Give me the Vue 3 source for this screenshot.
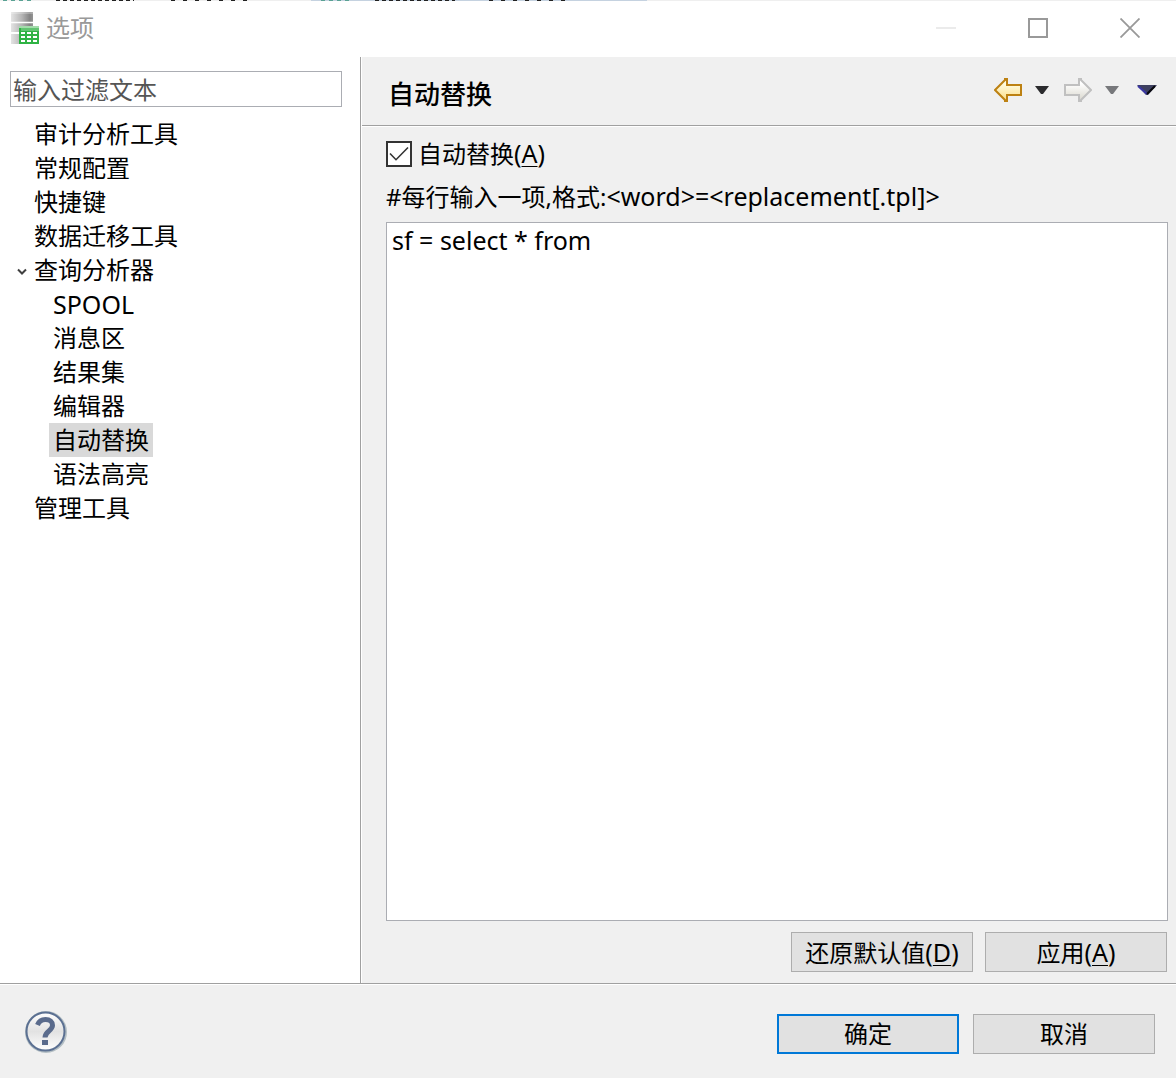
<script setup>
import { ref } from 'vue'

const filter = ref('')
const enabled = ref(true)
const rules = ref('sf = select * from')
const selected = ref('自动替换')
const expanded = ref(true)

const tree = [
  { label: '审计分析工具' },
  { label: '常规配置' },
  { label: '快捷键' },
  { label: '数据迁移工具' },
  {
    label: '查询分析器',
    children: ['SPOOL', '消息区', '结果集', '编辑器', '自动替换', '语法高亮'],
  },
  { label: '管理工具' },
]

const isLatin = (text) => /^[A-Z]+$/.test(text)
</script>

<template>
  <div class="dialog">
    <div class="backdrop-edge"><span></span></div>
    <header class="titlebar">
      <svg class="app-icon" width="28" height="32" viewBox="0 0 28 32" aria-hidden="true">
        <defs>
          <linearGradient id="slab" x1="0" x2="1" y1="0" y2="0">
            <stop offset="0" stop-color="#e4e4e4" />
            <stop offset="0.5" stop-color="#b4b4b4" />
            <stop offset="0.85" stop-color="#848484" />
            <stop offset="1" stop-color="#949494" />
          </linearGradient>
        </defs>
        <path d="M0 0h22v10H0zM0 11h22v9H0zM0 22h22v10H0z" fill="url(#slab)" />
        <path d="M0 0h22v2H0zM0 9h22v1H0zM0 11h22v1H0z" fill="#fff" opacity=".25" />
        <path d="M8 14h20v2H8z" fill="#a4dcac" />
        <path d="M8 16h20v16H8z" fill="#2fb344" />
        <path d="M10 16h18v3H10z" fill="#62c472" />
        <path d="M10 20h4v2h-4zM16 20h4v2h-4zM22 20h4v2h-4zM10 24h4v2h-4zM16 24h4v2h-4zM22 24h4v2h-4zM10 28h4v2h-4zM16 28h4v2h-4zM22 28h4v2h-4z" fill="#fff" />
      </svg>
      <h1>选项</h1>
      <div class="window-controls">
        <button type="button" aria-label="最小化" disabled>
          <svg width="20" height="20" viewBox="0 0 20 20"><path d="M0 9h20v2H0z" fill="#ebebeb" /></svg>
        </button>
        <button type="button" aria-label="最大化">
          <svg width="20" height="20" viewBox="0 0 20 20"><path d="M1 1h18v18H1z" fill="none" stroke="#999" stroke-width="2" /></svg>
        </button>
        <button type="button" aria-label="关闭">
          <svg width="20" height="20" viewBox="0 0 20 20"><path d="M.5 .5l19 19M19.5 .5l-19 19" stroke="#999" stroke-width="1.8" /></svg>
        </button>
      </div>
    </header>

    <div class="body">
      <nav class="sidebar">
        <input v-model="filter" class="filter" type="text" placeholder="输入过滤文本" aria-label="输入过滤文本" />
        <ul class="tree">
          <li v-for="node in tree" :key="node.label">
            <div class="row">
              <button v-if="node.children" type="button" class="twisty" aria-label="展开" :aria-expanded="expanded" @click="expanded = !expanded">
                <svg width="12" height="8" viewBox="0 0 12 8"><path d="M2 1.5l4 4 4-4" fill="none" stroke="#404040" stroke-width="2" /></svg>
              </button>
              <button type="button" class="node" :class="{ selected: selected === node.label }" @click="selected = node.label">{{ node.label }}</button>
            </div>
            <ul v-if="node.children && expanded" class="branch">
              <li v-for="child in node.children" :key="child" class="row">
                <button type="button" class="node" :class="{ selected: selected === child, latin: isLatin(child) }" @click="selected = child">{{ child }}</button>
              </li>
            </ul>
          </li>
        </ul>
      </nav>

      <main class="page">
        <div class="page-head">
          <h2>自动替换</h2>
          <div class="history">
            <button type="button" aria-label="后退">
              <svg width="28" height="24" viewBox="0 0 28 24">
                <defs>
                  <linearGradient id="gold" x1="0" x2="0" y1="0" y2="1">
                    <stop offset="0.2" stop-color="#fffbe0" />
                    <stop offset="1" stop-color="#fbdc84" />
                  </linearGradient>
                </defs>
                <path d="M1 12L11 2V1h2v6h14v10H13v6h-2v-1L1 12z" fill="url(#gold)" stroke="#bd8112" stroke-width="2" />
              </svg>
            </button>
            <button type="button" class="drop" aria-label="后退历史">
              <svg width="14" height="8" viewBox="0 0 14 8"><path d="M0 0h14L8 8H6z" fill="#2b2b2d" /></svg>
            </button>
            <button type="button" aria-label="前进" disabled>
              <svg width="28" height="24" viewBox="0 0 28 24">
                <defs>
                  <linearGradient id="silver" x1="0" x2="0" y1="0" y2="1">
                    <stop offset="0.2" stop-color="#fff" />
                    <stop offset="1" stop-color="#d8d6cc" />
                  </linearGradient>
                </defs>
                <path d="M27 12L17 2V1h-2v6H1v10h14v6h2v-1l10-10z" fill="url(#silver)" stroke="#c0c0c0" stroke-width="2" />
              </svg>
            </button>
            <button type="button" class="drop" aria-label="前进历史" disabled>
              <svg width="14" height="8" viewBox="0 0 14 8"><path d="M0 0h14L8 8H6z" fill="#77787b" /></svg>
            </button>
            <button type="button" aria-label="菜单">
              <svg width="20" height="10" viewBox="0 0 20 10">
                <path d="M0 0h20L11 10H9z" fill="#3e4060" />
                <path d="M1 1l9 8" stroke="#3a36a4" stroke-width="2" />
                <path d="M18 1l-8 8" stroke="#08080c" stroke-width="2" />
              </svg>
            </button>
          </div>
        </div>

        <div class="page-body">
          <div class="option">
            <span class="check">
              <input id="enable" v-model="enabled" type="checkbox" />
              <svg v-if="enabled" width="26" height="26" viewBox="0 0 26 26" aria-hidden="true"><path d="M4 12.5l6 6.200L22 6.500" fill="none" stroke="#333" stroke-width="1.600" /></svg>
            </span>
            <label for="enable">自动替换<span class="latin">(<u>A</u>)</span></label>
          </div>
          <label class="hint" for="rules">#每行输入一项,格式:<span class="latin">&lt;word&gt;=&lt;replacement[.tpl]&gt;</span></label>
          <textarea id="rules" v-model="rules" class="latin" spellcheck="false"></textarea>
          <div class="page-actions">
            <button type="button" class="btn">还原默认值<span class="latin">(<u>D</u>)</span></button>
            <button type="button" class="btn">应用<span class="latin">(<u>A</u>)</span></button>
          </div>
        </div>
      </main>
    </div>

    <footer class="footer">
      <button type="button" class="help" aria-label="帮助">
        <svg width="42" height="42" viewBox="0 0 42 42">
          <defs>
            <linearGradient id="glass" x1="0" x2="0" y1="0" y2="1">
              <stop offset="0" stop-color="#fff" />
              <stop offset="0.5" stop-color="#e2e2e2" />
              <stop offset="1" stop-color="#fff" />
            </linearGradient>
          </defs>
          <circle cx="21" cy="21" r="20" fill="none" stroke="#b4bfc4" stroke-width="2" />
          <circle cx="20.5" cy="20.5" r="19" fill="url(#glass)" stroke="#5b7092" stroke-width="2" />
          <path d="M12.5 14C14 10 17 8.500 20.500 8.500c4.500 0 7 2.300 7 5.800 0 5.700-7.500 5.700-7.500 12.200" fill="none" stroke="#5a6b8c" stroke-width="5" />
          <path d="M17 29h6v5h-6z" fill="#5a6b8c" />
        </svg>
      </button>
      <div class="footer-actions">
        <button type="button" class="btn primary">确定</button>
        <button type="button" class="btn">取消</button>
      </div>
    </footer>
  </div>
</template>

<style>
body {
  margin: 0;
}
</style>

<style scoped>
.dialog {
  display: flex;
  flex-direction: column;
  min-height: 100vh;
  background: #f0f0f0;
  color: #000;
  font: 24px/34px "Noto Sans", "Noto Sans CJK SC", sans-serif;
}

button,
input,
textarea {
  margin: 0;
  padding: 0;
  border: 0;
  border-radius: 0;
  background: none;
  box-sizing: border-box;
  color: inherit;
  font: inherit;
}

svg {
  display: block;
}

h1,
h2,
ul {
  margin: 0;
  padding: 0;
  font-weight: 400;
  list-style: none;
}

u {
  text-decoration-thickness: 1px;
  text-underline-offset: 3px;
}

.latin {
  font-size: 25px;
}

.backdrop-edge {
  height: 1px;
  background: #efefef;
}

/* sliver of the window behind: two tabs, each with an icon and a caption */
.backdrop-edge span {
  display: block;
  width: 647px;
  max-width: 100%;
  height: 1px;
  background:
    repeating-linear-gradient(90deg, #222 0 4px, transparent 4px 7px) 56px 0 / 78px 1px no-repeat,
    repeating-linear-gradient(90deg, #222 0 4px, transparent 4px 12px) 171px 0 / 82px 1px no-repeat,
    repeating-linear-gradient(90deg, #222 0 4px, transparent 4px 7px) 375px 0 / 80px 1px no-repeat,
    repeating-linear-gradient(90deg, #222 0 4px, transparent 4px 12px) 489px 0 / 82px 1px no-repeat,
    repeating-linear-gradient(90deg, #5aa294 0 4px, transparent 4px 8px) 3px 0 / 30px 1px no-repeat,
    repeating-linear-gradient(90deg, #5aa294 0 4px, transparent 4px 8px) 321px 0 / 30px 1px no-repeat,
    linear-gradient(90deg, #efefef 311px, #c5d2e0 311px);
}

.titlebar {
  display: flex;
  align-items: center;
  box-sizing: border-box;
  height: 56px;
  padding: 0 0 2px 11px;
  gap: 7px;
  background: #fff;
}

.titlebar h1 {
  font-size: 24px;
  color: #999;
}

.window-controls {
  display: flex;
  align-self: stretch;
  margin-left: auto;
}

.window-controls button {
  display: grid;
  place-items: center;
  width: 92px;
}

.body {
  display: flex;
  flex: 1;
  border-bottom: 1px solid #a0a0a0;
}

.sidebar {
  flex: none;
  box-sizing: border-box;
  width: 361px;
  padding: 14px 18px 14px 10px;
  border-right: 1px solid #a0a0a0;
  background: #fff;
}

.filter {
  display: block;
  width: 100%;
  height: 36px;
  padding: 0 2px;
  border: 1px solid #abadb3;
}

.filter::placeholder {
  color: #555;
  opacity: 1;
}

.tree {
  padding: 10px 0 0 20px;
}

.branch {
  padding-left: 19px;
}

.row {
  position: relative;
  display: flex;
  height: 34px;
}

.node {
  padding: 0 4px;
  white-space: nowrap;
}

.node.selected {
  background: #d9d9d9;
}

.twisty {
  position: absolute;
  left: -14px;
  top: 15px;
}

.page {
  display: flex;
  flex: 1;
  flex-direction: column;
  min-width: 0;
  border-left: 1px solid #fff;
}

.page-head {
  display: flex;
  align-items: center;
  justify-content: space-between;
  height: 68px;
  padding: 0 19px 0 26px;
  border-bottom: 1px solid #a0a0a0;
  box-shadow: 0 1px #fff;
}

.page-head h2 {
  padding-top: 6px;
  font-size: 26px;
  font-weight: 500;
}

.history {
  display: flex;
  align-items: center;
  gap: 13px;
  padding-bottom: 2px;
}

.drop {
  margin-right: 2px;
}

.history button:last-child {
  margin-left: 3px;
}

.page-body {
  display: flex;
  flex: 1;
  flex-direction: column;
  padding: 10px 8px 11px 24px;
}

.option {
  display: flex;
  align-items: center;
  gap: 6px;
}

.check {
  position: relative;
  height: 26px;
}

.check input {
  display: block;
  width: 26px;
  height: 26px;
  border: 2px solid #333;
  background: #fff;
  appearance: none;
}

.check svg {
  position: absolute;
  inset: 0;
  pointer-events: none;
}

.hint {
  margin: 8px 0;
}

textarea {
  flex: 1;
  width: 100%;
  min-height: 120px;
  padding: 0 5px;
  border: 1px solid #abadb3;
  background: #fff;
  resize: none;
}

.page-actions,
.footer-actions {
  display: flex;
}

.page-actions {
  justify-content: flex-end;
  gap: 12px;
  padding: 11px 1px 0 0;
}

.btn {
  width: 182px;
  height: 40px;
  border: 1px solid #adadad;
  background: #e1e1e1;
  white-space: nowrap;
}

.btn.primary {
  border: 2px solid #0078d7;
}

.footer {
  display: flex;
  align-items: center;
  justify-content: space-between;
  height: 93px;
  padding: 0 21px 0 25px;
  border-top: 1px solid #fff;
}

.footer-actions {
  gap: 14px;
  padding-top: 4px;
}
</style>
